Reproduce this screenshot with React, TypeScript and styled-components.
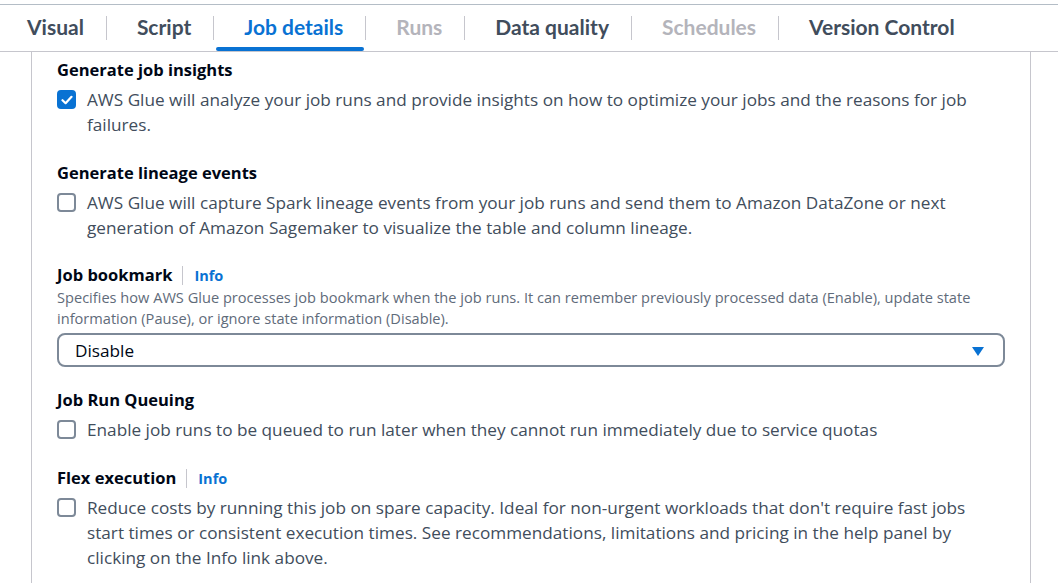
import React from "react";
import styled, { createGlobalStyle } from "styled-components";

const GlobalStyle = createGlobalStyle`
  html, body { margin: 0; padding: 0; background: #ffffff; }
  body { font-family: "Open Sans", "Noto Sans", Arial, sans-serif; -webkit-font-smoothing: antialiased; }
  * { box-sizing: border-box; }
`;

const Page = styled.div`
  padding-top: 4px;
  width: 1058px;
  height: 583px;
  overflow: hidden;
`;

const TabBar = styled.div`
  display: flex;
  align-items: stretch;
  height: 48px;
  border-top: 1px solid #b4bdc6;
  border-bottom: 1px solid #c6c6cd;
`;

const Tab = styled.div<{ $active?: boolean; $disabled?: boolean; $first?: boolean; $last?: boolean }>`
  position: relative;
  display: flex;
  align-items: center;
  padding: 0 23px 3px ${(p) => (p.$first ? "27px" : "30px")};
  font-family: Lato, "Open Sans", sans-serif;
  font-weight: 700;
  font-size: 21px;
  color: ${(p) => (p.$active ? "#0972d3" : p.$disabled ? "#b4b4bb" : "#414d5c")};
  white-space: nowrap;

  &::after {
    content: "";
    display: ${(p) => (p.$last ? "none" : "block")};
    position: absolute;
    right: 0;
    top: 11px;
    height: 24px;
    width: 1px;
    background: #c6c6cd;
  }

  &::before {
    content: "";
    display: ${(p) => (p.$active ? "block" : "none")};
    position: absolute;
    left: 2px;
    right: 2px;
    bottom: 0;
    height: 4px;
    border-radius: 2px;
    background: #0972d3;
  }
`;

const Panel = styled.div`
  margin-left: 31px;
  width: 1000px;
  min-height: 540px;
  border-left: 1px solid #c6c6cd;
  border-right: 1px solid #c6c6cd;
  padding: 7px 25px 0 25px;
  display: flex;
  flex-direction: column;
  gap: 25px;
`;

const Section = styled.div<{ $gap?: number; $offset?: number }>`
  display: flex;
  flex-direction: column;
  gap: ${(p) => p.$gap ?? 6}px;
  margin-top: ${(p) => p.$offset ?? 0}px;
`;

const HeaderRow = styled.div`
  display: flex;
  align-items: center;
  height: 22px;
`;

const Heading = styled.div`
  font-size: 16.5px;
  line-height: 22px;
  font-weight: 700;
  color: #000716;
`;

const InfoLink = styled.span`
  display: inline-flex;
  align-items: center;
  margin-left: 10px;
  padding-left: 11px;
  border-left: 1px solid #c6c6cd;
  height: 19px;
  font-size: 14.5px;
  font-weight: 700;
  color: #0972d3;
`;

const Description = styled.div`
  font-size: 14.6px;
  line-height: 21px;
  color: #5f6b7a;
  padding-top: 1px;
`;

const CheckRow = styled.label`
  display: flex;
  align-items: flex-start;
  gap: 11px;
`;

const Box = styled.span<{ $checked?: boolean }>`
  flex: none;
  width: 19px;
  height: 19px;
  margin-top: 3px;
  border-radius: 4px;
  border: 2px solid ${(p) => (p.$checked ? "#0972d3" : "#7d8998")};
  background: ${(p) => (p.$checked ? "#0972d3" : "#ffffff")};
  display: flex;
  align-items: center;
  justify-content: center;
`;

const CheckText = styled.span`
  font-size: 17.2px;
  line-height: 25px;
  color: #414d5c;
`;

const Select = styled.div`
  margin-top: 4px;
  height: 34px;
  border: 2px solid #7d8998;
  border-radius: 8px;
  display: flex;
  align-items: center;
  justify-content: space-between;
  padding: 0 19px 0 16px;
  font-size: 17.2px;
  color: #000716;
`;

const Caret = styled.span`
  width: 0;
  height: 0;
  border-left: 6px solid transparent;
  border-right: 6px solid transparent;
  border-top: 9px solid #0972d3;
  margin-top: 2px;
`;

const Checkbox = ({ checked, children }: { checked?: boolean; children: React.ReactNode }) => (
  <CheckRow>
    <Box $checked={checked}>
      {checked && (
        <svg width="12" height="10" viewBox="0 0 12 10" fill="none">
          <path d="M1.5 5.2 L4.6 8.2 L10.5 1.8" stroke="#fff" strokeWidth="2.2" strokeLinecap="round" strokeLinejoin="round" />
        </svg>
      )}
    </Box>
    <CheckText>{children}</CheckText>
  </CheckRow>
);

const tabs = [
  { label: "Visual" },
  { label: "Script" },
  { label: "Job details", active: true },
  { label: "Runs", disabled: true },
  { label: "Data quality" },
  { label: "Schedules", disabled: true },
  { label: "Version Control" },
];

export default function App() {
  return (
    <>
      <GlobalStyle />
      <Page>
        <TabBar>
          {tabs.map((t, i) => (
            <Tab key={t.label} $active={t.active} $disabled={t.disabled} $first={i === 0} $last={i === tabs.length - 1}>
              {t.label}
            </Tab>
          ))}
        </TabBar>
        <Panel>
          <Section>
            <HeaderRow>
              <Heading>Generate job insights</Heading>
            </HeaderRow>
            <Checkbox checked>
              AWS Glue will analyze your job runs and provide insights on how to optimize your jobs and the reasons for job failures.
            </Checkbox>
          </Section>
          <Section>
            <HeaderRow>
              <Heading>Generate lineage events</Heading>
            </HeaderRow>
            <Checkbox>
              AWS Glue will capture Spark lineage events from your job runs and send them to Amazon DataZone or next generation of Amazon Sagemaker to visualize the table and column lineage.
            </Checkbox>
          </Section>
          <Section $gap={0} $offset={-1}>
            <HeaderRow>
              <Heading>Job bookmark</Heading>
              <InfoLink>Info</InfoLink>
            </HeaderRow>
            <Description>
              Specifies how AWS Glue processes job bookmark when the job runs. It can remember previously processed data (Enable), update state information (Pause), or ignore state information (Disable).
            </Description>
            <Select>
              <span>Disable</span>
              <Caret />
            </Select>
          </Section>
          <Section $offset={-3}>
            <HeaderRow>
              <Heading>Job Run Queuing</Heading>
            </HeaderRow>
            <Checkbox>Enable job runs to be queued to run later when they cannot run immediately due to service quotas</Checkbox>
          </Section>
          <Section>
            <HeaderRow>
              <Heading>Flex execution</Heading>
              <InfoLink>Info</InfoLink>
            </HeaderRow>
            <Checkbox>
              Reduce costs by running this job on spare capacity. Ideal for non-urgent workloads that don't require fast jobs start times or consistent execution times. See recommendations, limitations and pricing in the help panel by clicking on the Info link above.
            </Checkbox>
          </Section>
        </Panel>
      </Page>
    </>
  );
}
